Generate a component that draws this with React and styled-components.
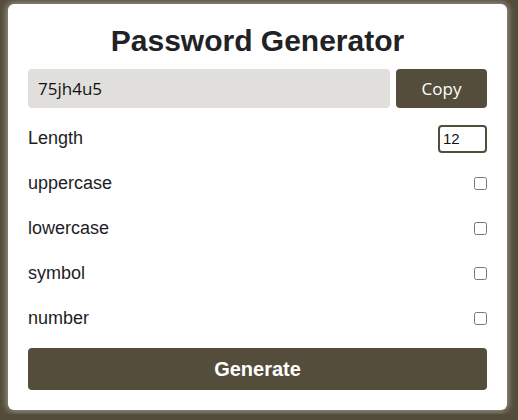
import React, { useState } from 'react';
import styled, { createGlobalStyle } from 'styled-components';

const options = ['uppercase', 'lowercase', 'symbol', 'number'];

const App = () => {
  const [length, setLength] = useState(12);

  return (
    <>
      <GlobalStyle />
      <Card>
        <Title>Password Generator</Title>
        <OutputRow>
          <Output readOnly value="75jh4u5" />
          <CopyButton>Copy</CopyButton>
        </OutputRow>
        <Options>
          <Row>
            <Label>Length</Label>
            <LengthInput
              type="number"
              value={length}
              onChange={(e) => setLength(e.target.value)}
            />
          </Row>
          {options.map((name) => (
            <Row key={name}>
              <Label>{name}</Label>
              <Check type="checkbox" />
            </Row>
          ))}
        </Options>
        <GenerateButton>Generate</GenerateButton>
      </Card>
    </>
  );
};

const GlobalStyle = createGlobalStyle`
  html, body {
    margin: 0;
    background-color: #544c3b;
  }
  body {
    padding: 4px 8px;
    font-family: "Liberation Sans", Arial, sans-serif;
  }
`;

const Card = styled.div`
  width: 499px;
  box-sizing: border-box;
  padding: 20px;
  background-color: #fff;
  border-radius: 6px;
  box-shadow: 0 0 7px 1px rgba(190, 188, 178, 0.75);
`;

const Title = styled.h1`
  margin: 0;
  font-size: 30px;
  line-height: 34px;
  font-weight: 700;
  text-align: center;
  color: #212226;
`;

const OutputRow = styled.div`
  display: flex;
  gap: 6px;
  margin-top: 11px;
  height: 39px;
`;

const Output = styled.input`
  flex: 1;
  min-width: 0;
  border: none;
  outline: none;
  border-radius: 4px;
  padding: 0 10px;
  background-color: #e0dfdc;
  color: #111;
  font-family: "Open Sans", sans-serif;
  font-size: 17px;
  font-weight: 500;
`;

const CopyButton = styled.button`
  width: 91px;
  border: none;
  border-radius: 4px;
  background-color: #554d3b;
  color: #fff;
  font-family: "Open Sans", sans-serif;
  font-size: 17px;
  font-weight: 500;
  cursor: pointer;
`;

const Options = styled.div`
  margin-top: 8px;
`;

const Row = styled.div`
  display: flex;
  justify-content: space-between;
  align-items: center;
  height: 45px;
`;

const Label = styled.span`
  font-size: 18px;
  color: #1d1d1f;
`;

const LengthInput = styled.input`
  width: 49px;
  height: 28px;
  box-sizing: border-box;
  border: 2px solid #554d3b;
  border-radius: 4px;
  padding: 0 3px;
  font-family: "Liberation Sans", Arial, sans-serif;
  font-size: 15px;
  color: #111;
  outline: none;
`;

const Check = styled.input`
  width: 13px;
  height: 13px;
  margin: 0;
`;

const GenerateButton = styled.button`
  display: block;
  width: 100%;
  height: 42px;
  margin-top: 7px;
  border: none;
  border-radius: 4px;
  background-color: #554d3b;
  color: #fff;
  font-family: "Liberation Sans", Arial, sans-serif;
  font-size: 20px;
  font-weight: 700;
  cursor: pointer;
`;

export default App;
